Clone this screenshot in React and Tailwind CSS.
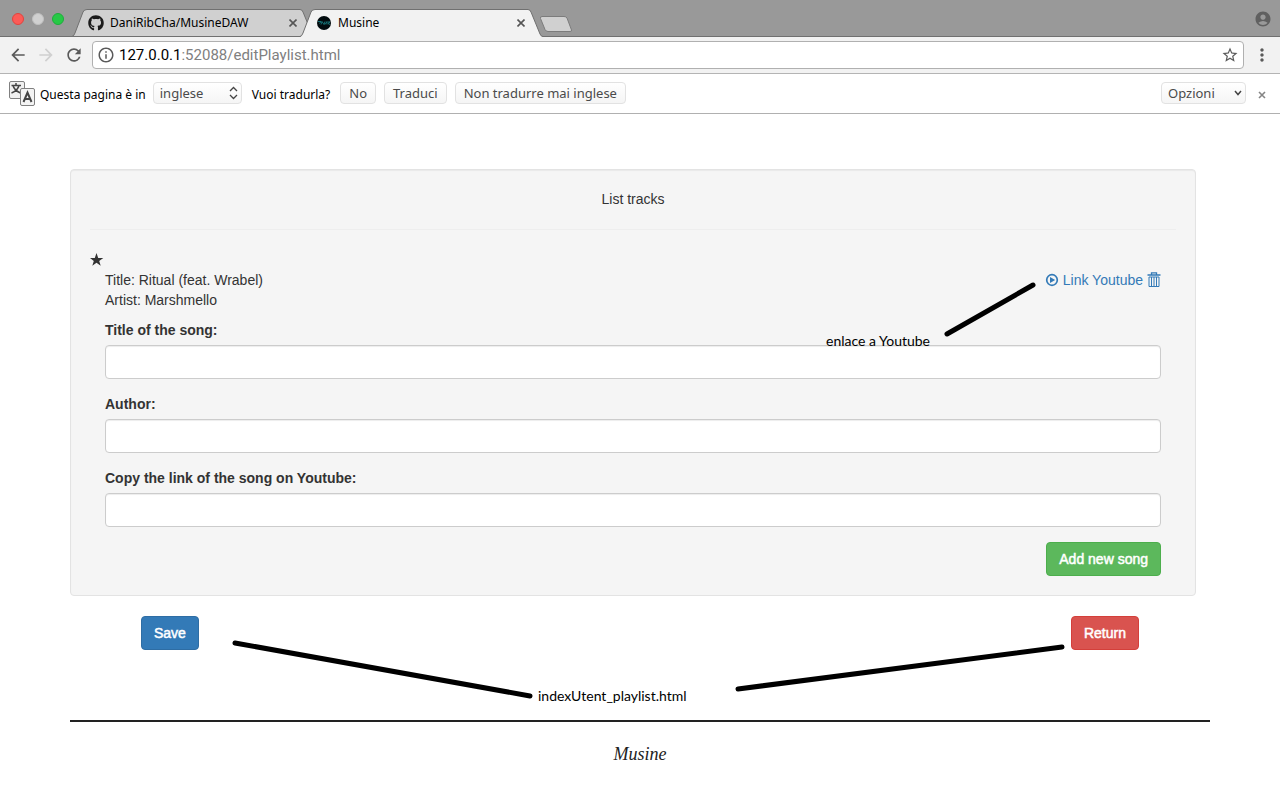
import React from "react";
import { FaGithub } from "react-icons/fa";
import { MdAccountCircle, MdArrowBack, MdArrowForward, MdInfoOutline, MdMoreVert, MdRefresh, MdStarBorder } from "react-icons/md";

function Tab({ title, icon, active }) {
  return (
    <div className={`relative h-7 w-[243px] shrink-0 ${active ? "z-10 -ml-[15px]" : ""}`}>
      <svg className="absolute inset-0" width="243" height="28" viewBox="0 0 243 28" aria-hidden="true">
        <path
          d="M0 28 Q2 27 3 24 L11 3 Q12 .5 15 .5 H228 Q230 .5 231 3 L240 25 Q241 27.5 243 28 Z"
          fill={active ? "#f2f2f2" : "#d0d0d0"}
        />
        <path
          d="M0 27.5 Q2 27 3 24 L11 3 Q12 .5 15 .5 H228 Q230 .5 231 3 L240 25 Q241 27.5 243 27.5"
          fill="none"
          stroke="#707070"
        />
        {!active && <path d="M0 27.5 H243" stroke="#707070" />}
      </svg>
      <div className="relative flex h-full items-center pl-4 pr-4">
        {icon}
        <span className="ml-1.5 grow text-xs leading-4 text-black">{title}</span>
        <button type="button" aria-label={`Close ${title}`} className="flex size-3 items-center justify-center">
          <svg width="8" height="8" viewBox="0 0 8 8" stroke="#555" strokeWidth="1.6" aria-hidden="true">
            <path d="M.5 .5 L7.5 7.5 M7.5 .5 L.5 7.5" />
          </svg>
        </button>
      </div>
    </div>
  );
}

function MusineIcon() {
  return (
    <svg width="16" height="16" viewBox="0 0 16 16" className="shrink-0" aria-hidden="true">
      <circle cx="8" cy="8" r="7" fill="#020b0e" />
      <path d="M2 6.500h3l-1.500 2M5 9.500l1-3 2 3 1-3M9 9.500l2-3 0 3M12 7h2l-2 1.500 2 1" fill="none" stroke="#177b80" strokeWidth=".9" />
    </svg>
  );
}

function TabStrip() {
  return (
    <div className="flex h-[37px] items-end bg-[#999] shadow-[inset_0_-1px_0_#707070]">
      <div className="flex w-[72px] shrink-0 gap-2 self-stretch pl-3 pt-[13px]">
        <button type="button" aria-label="Close window" className="size-3 rounded-full border border-[#e0443e] bg-[#fc5b57]" />
        <button type="button" aria-label="Minimize window" className="size-3 rounded-full border border-[#c0c0c0] bg-[#d0d0d0]" />
        <button type="button" aria-label="Zoom window" className="size-3 rounded-full border border-[#1ead3c] bg-[#27c946]" />
      </div>
      <Tab title="DaniRibCha/MusineDAW" icon={<FaGithub size={16} color="#1b1b1b" className="shrink-0" />} />
      <Tab title="Musine" icon={<MusineIcon />} active />
      <button type="button" aria-label="New tab" className="-ml-1 mb-1">
        <svg width="34" height="17" viewBox="0 0 34 17" aria-hidden="true">
          <path d="M3 .5 H25 Q27 .5 28 2 L32.500 14 Q33 15.500 31 15.500 H9 Q7 15.500 6 13.500 L1.500 2.500 Q1 .5 3 .5Z" fill="#d0d0d0" stroke="#7c7c7c" />
        </svg>
      </button>
      <button type="button" aria-label="Profile" className="ml-auto mr-2 self-center">
        <MdAccountCircle size={18} color="#606060" />
      </button>
    </div>
  );
}

function Toolbar() {
  return (
    <div className="flex h-[37px] items-center border-b border-[#b4b4b4] bg-[#f2f2f2] pl-2">
      <button type="button" aria-label="Back" className="mr-2"><MdArrowBack size={20} color="#5a5a5a" /></button>
      <button type="button" aria-label="Forward" className="mr-2"><MdArrowForward size={20} color="#d0d0d0" /></button>
      <button type="button" aria-label="Reload" className="mr-2"><MdRefresh size={20} color="#5a5a5a" /></button>
      <div className="flex h-7 grow items-center rounded border border-[#b0b0b0] bg-white px-1">
        <MdInfoOutline size={18} color="#5a5a5a" />
        <span className="ml-1 grow font-[Roboto,sans-serif] text-[15px] leading-5 text-[#808080]">
          <span className="text-black">127.0.0.1</span>:52088/editPlaylist.html
        </span>
        <button type="button" aria-label="Bookmark"><MdStarBorder size={18} color="#5a5a5a" /></button>
      </div>
      <button type="button" aria-label="Menu" className="mx-2"><MdMoreVert size={20} color="#5a5a5a" /></button>
    </div>
  );
}

const pill = "h-[22px] rounded border border-[#e2e2e2] bg-gradient-to-b from-white to-[#f5f5f5] text-[13px] leading-5 text-[#4a4a4a]";

function TranslateIcon() {
  return (
    <svg width="28" height="28" viewBox="0 0 28 28" className="shrink-0" aria-hidden="true">
      <rect x="1.500" y="2.500" width="15" height="17" rx="1.500" fill="#f0f0f0" stroke="#808080" />
      <path d="M8 4v2M3.500 6.500h9.500M5 6.500c1 4 4 6 7.500 7.500M11 6.500c-1 4-3.500 6-7.500 7.500" fill="none" stroke="#444" strokeWidth="1.500" />
      <rect x="12.500" y="9.500" width="14" height="17" rx="1.500" fill="#f4f4f4" stroke="#808080" />
      <path d="M15.500 23 L19.500 13.500 L23.500 23 M17 20h5" fill="none" stroke="#444" strokeWidth="2" />
    </svg>
  );
}

function TranslateBar() {
  return (
    <div className="flex h-10 items-center border-b border-[#b0b0b0] bg-white pb-0.5 pl-2 text-xs text-black">
      <TranslateIcon />
      <label htmlFor="lang" className="ml-1 mt-1">Questa pagina è in</label>
      <span className="relative ml-[7px] flex">
        <select id="lang" className={`${pill} w-[89px] appearance-none px-1.5`} defaultValue="inglese">
          <option>inglese</option>
        </select>
        <svg className="pointer-events-none absolute right-1 top-1" width="9" height="14" viewBox="0 0 9 14" fill="none" stroke="#444" strokeWidth="1.300" aria-hidden="true">
          <path d="M1 5 L4.500 1.500 L8 5 M1 9 L4.500 12.500 L8 9" />
        </svg>
      </span>
      <span className="ml-2.5 mt-1">Vuoi tradurla?</span>
      <button type="button" className={`${pill} ml-2.5 px-2`}>No</button>
      <button type="button" className={`${pill} ml-2 px-2`}>Traduci</button>
      <button type="button" className={`${pill} ml-2 px-2`}>Non tradurre mai inglese</button>
      <span className="relative ml-auto flex">
        <select aria-label="Opzioni" className={`${pill} w-[85px] appearance-none px-1.5`} defaultValue="Opzioni">
          <option>Opzioni</option>
        </select>
        <svg className="pointer-events-none absolute right-1 top-2" width="8" height="6" viewBox="0 0 8 6" fill="none" stroke="#444" strokeWidth="1.500" aria-hidden="true">
          <path d="M1 1 L4 4.500 L7 1" />
        </svg>
      </span>
      <button type="button" aria-label="Close bar" className="ml-3 mr-[14px] mt-1">
        <svg width="8" height="8" viewBox="0 0 8 8" stroke="#858585" strokeWidth="1.600" aria-hidden="true">
          <path d="M1 1 L7 7 M7 1 L1 7" />
        </svg>
      </button>
    </div>
  );
}

function Field({ id, label }) {
  return (
    <div className="mb-[15px]">
      <label htmlFor={id} className="mb-[5px] block font-bold">{label}</label>
      <input
        id={id}
        type="text"
        className="block h-[34px] w-full rounded border border-[#ccc] bg-white px-3 shadow-[inset_0_1px_1px_rgba(0,0,0,0.075)]"
      />
    </div>
  );
}

function PlayIcon() {
  return (
    <svg width="14" height="14" viewBox="0 0 14 14" aria-hidden="true">
      <circle cx="7" cy="7" r="5.300" fill="none" stroke="#337ab7" strokeWidth="1.700" />
      <path d="M5 3.900 L10.200 7 L5 10.100 Z" fill="#337ab7" />
    </svg>
  );
}

function TrashIcon() {
  return (
    <svg width="14" height="16" viewBox="0 0 14 16" fill="none" stroke="#337ab7" aria-hidden="true">
      <path d="M4.500 2.500V.8H9.500V2.500M.5 3H13.500" strokeWidth="1.300" />
      <path d="M2 5V14.500H12V5Z" />
      <path d="M4.500 5V14M7 5V14M9.500 5V14" />
    </svg>
  );
}

const button = "h-[34px] rounded border px-3 text-white [-webkit-text-stroke:0.5px_white]";
const note = "absolute font-[Lato,sans-serif] text-sm leading-5 text-black";

export default function App() {
  return (
    <div className="min-h-screen bg-white font-['Noto_Sans',sans-serif]">
      <header>
        <TabStrip />
        <Toolbar />
        <TranslateBar />
      </header>
      <div className="relative mx-auto max-w-[1140px] pt-[55px] font-['Liberation_Sans',sans-serif] text-sm leading-5 text-[#333]">
        <main>
          <section className="mr-3.5 rounded border border-[#e3e3e3] bg-[#f5f5f5] p-[19px] shadow-[inset_0_1px_1px_rgba(0,0,0,0.05)]">
            <h1 className="text-center">List tracks</h1>
            <hr className="my-5 border-[#eee]" />
            <div className="flex h-5 items-center">
              <svg width="14" height="14" viewBox="0 0 14 14" fill="#333" aria-hidden="true">
                <path d="M6.500 0 L8.200 4.900 H13.300 L9.200 7.900 L10.700 12.700 L6.500 9.800 L2.300 12.700 L3.800 7.900 L-.3 4.900 H4.800 Z" />
              </svg>
            </div>
            <div className="px-[15px]">
              <div className="mb-2.5 flex items-start justify-between">
                <p>Title: Ritual (feat. Wrabel)<br />Artist: Marshmello</p>
                <div className="flex items-center gap-1 text-[#337ab7]">
                  <a href="#youtube" className="flex items-center gap-1"><PlayIcon />Link Youtube</a>
                  <button type="button" aria-label="Delete song"><TrashIcon /></button>
                </div>
              </div>
              <form>
                <Field id="song-title" label="Title of the song:" />
                <Field id="song-author" label="Author:" />
                <Field id="song-link" label="Copy the link of the song on Youtube:" />
                <div className="flex justify-end">
                  <button type="button" className={`${button} border-[#4cae4c] bg-[#5cb85c]`}>Add new song</button>
                </div>
              </form>
            </div>
          </section>
          <div className="mt-5 flex justify-between px-[71px]">
            <button type="button" className={`${button} border-[#2e6da4] bg-[#337ab7]`}>Save</button>
            <button type="button" className={`${button} border-[#d43f3a] bg-[#d9534f]`}>Return</button>
          </div>
        </main>
        <footer className="mt-[70px] border-t-2 border-[#222] pt-[18px] text-center font-['Liberation_Serif',serif] text-lg leading-7 italic text-[#222]">
          Musine
        </footer>
        <svg className="pointer-events-none absolute left-0 top-0" width="1140" height="640" viewBox="0 0 1140 640" fill="none" stroke="#000" strokeWidth="5" strokeLinecap="round" aria-hidden="true">
          <path d="M877 220 L963 171" />
          <path d="M165 529 L460 582" />
          <path d="M668 575 L992 533" />
        </svg>
        <span className={`${note} left-[756px] top-[217px]`}>enlace a Youtube</span>
        <span className={`${note} left-[468px] top-[572px]`}>indexUtent_playlist.html</span>
      </div>
    </div>
  );
}
